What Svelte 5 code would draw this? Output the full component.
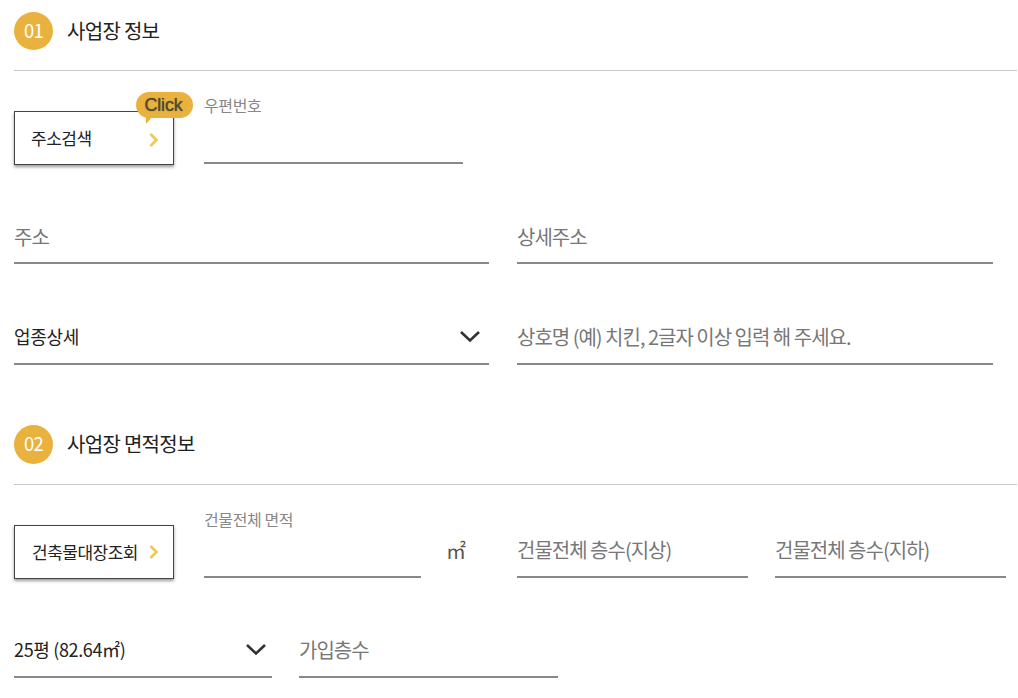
<script>
  const yellowArrow = "M1.5 1 L7.5 7 L1.5 13";
</script>

<div class="page">
  <div class="head first">
    <span class="num">01</span>
    <h2>사업장 정보</h2>
  </div>

  <div class="row r1">
    <button class="btn addr">
      주소검색
      <svg width="10" height="14" viewBox="0 0 10 14"><path d={yellowArrow} /></svg>
      <span class="click">Click</span>
    </button>
    <div class="field zip">
      <span class="small">우편번호</span>
    </div>
  </div>

  <div class="row r2">
    <div class="field w475"><span class="ph">주소</span></div>
    <div class="field w476"><span class="ph">상세주소</span></div>
  </div>

  <div class="row r3">
    <div class="field w475 select">
      <span class="val">업종상세</span>
      <svg class="chev" width="22" height="13" viewBox="0 0 22 13"><path d="M2 2 L11 10.5 L20 2" /></svg>
    </div>
    <div class="field w476"><span class="ph">상호명 (예) 치킨, 2글자 이상 입력 해 주세요.</span></div>
  </div>

  <div class="head second">
    <span class="num">02</span>
    <h2>사업장 면적정보</h2>
  </div>

  <div class="row r4">
    <button class="btn reg">
      건축물대장조회
      <svg width="10" height="14" viewBox="0 0 10 14"><path d={yellowArrow} /></svg>
    </button>
    <div class="field area">
      <span class="small">건물전체 면적</span>
    </div>
    <span class="unit">㎡</span>
    <div class="field w231"><span class="ph">건물전체 층수(지상)</span></div>
    <div class="field w231 last"><span class="ph">건물전체 층수(지하)</span></div>
  </div>

  <div class="row r5">
    <div class="field w258 select">
      <span class="val">25평 (82.64㎡)</span>
      <svg class="chev" width="22" height="13" viewBox="0 0 22 13"><path d="M2 2 L11 10.5 L20 2" /></svg>
    </div>
    <div class="field w259"><span class="ph">가입층수</span></div>
  </div>
</div>

<style>
  :global(body) {
    margin: 0;
    background: #fff;
  }

  .page {
    width: 1003px;
    height: 698px;
    padding-left: 14px;
    overflow: hidden;
    font-family: "Noto Sans CJK KR", "Noto Sans", sans-serif;
    color: #222;
  }

  .head {
    display: flex;
    align-items: center;
    height: 38px;
    padding-bottom: 20px;
    border-bottom: 1px solid #c8c8c8;
  }

  .head.first {
    padding-top: 12px;
  }

  .head.second {
    margin-top: 60px;
    padding-bottom: 21px;
  }

  .num {
    width: 39px;
    height: 38px;
    border-radius: 50%;
    background: #e9b23f;
    color: #fff;
    font-size: 18.5px;
    line-height: 37px;
    text-align: center;
    letter-spacing: -0.8px;
  }

  .second .num {
    height: 39px;
  }

  h2 {
    margin: -2px 0 0 14px;
    font-size: 20px;
    font-weight: 400;
    letter-spacing: -0.7px;
    color: #222;
  }

  .row {
    display: flex;
    align-items: flex-start;
  }

  .r1 {
    margin-top: 40px;
  }

  .r2 {
    margin-top: 59px;
    gap: 28px;
  }

  .r2 .field {
    padding-bottom: 14px;
  }

  .r3 {
    margin-top: 61px;
    gap: 28px;
  }

  .r4 {
    margin-top: 40px;
  }

  .r5 {
    margin-top: 59px;
    gap: 27px;
  }

  .btn {
    position: relative;
    box-sizing: border-box;
    display: flex;
    align-items: center;
    justify-content: space-between;
    width: 160px;
    height: 54px;
    padding: 0 14px 2px 16px;
    background: #fff;
    border: 1px solid #444;
    box-shadow: 0 2px 3px rgba(0, 0, 0, 0.4);
    font-family: inherit;
    font-size: 17px;
    letter-spacing: -0.5px;
    color: #222;
  }

  .btn.reg {
    padding-left: 17px;
  }

  .btn svg path {
    fill: none;
    stroke: #f0c850;
    stroke-width: 2.6;
  }

  .btn svg {
    margin-top: 2px;
  }

  .addr svg {
    margin-top: 6px;
  }

  .click {
    position: absolute;
    top: -20px;
    left: 121px;
    box-sizing: border-box;
    width: 57px;
    height: 26px;
    padding-right: 2px;
    border-radius: 13px;
    background: #e9b23f;
    color: #544a30;
    font-family: "Liberation Sans", sans-serif;
    font-size: 18px;
    line-height: 27px;
    text-align: center;
    letter-spacing: -0.2px;
    text-shadow: 0 0 1px #544a30;
  }

  .click::after {
    content: "";
    position: absolute;
    left: 10px;
    top: 24px;
    border-top: 8px solid #e9b23f;
    border-left: 0 solid transparent;
    border-right: 7px solid transparent;
  }

  .field {
    position: relative;
    box-sizing: border-box;
    display: flex;
    align-items: center;
    height: 40px;
    padding-bottom: 16px;
    border-bottom: 2px solid #888;
    font-size: 20px;
    letter-spacing: -1px;
  }

  .small {
    position: absolute;
    left: 0;
    top: -3px;
    font-size: 16px;
    color: #888;
    letter-spacing: -0.4px;
  }

  .ph {
    color: #777;
    white-space: nowrap;
  }

  .val {
    font-size: 18px;
    letter-spacing: -0.35px;
    color: #222;
    white-space: nowrap;
  }

  .select {
    justify-content: space-between;
    padding-right: 8px;
  }

  .w258.select {
    padding-right: 5px;
  }

  .chev path {
    fill: none;
    stroke: #333;
    stroke-width: 2.6;
  }

  .zip {
    width: 259px;
    margin-left: 30px;
    margin-top: -15px;
    height: 68px;
  }

  .area {
    width: 217px;
    margin-left: 30px;
    margin-top: -15px;
    height: 68px;
  }

  .unit {
    width: 96px;
    padding-left: 25px;
    box-sizing: border-box;
    margin-top: 11px;
    font-size: 20px;
    color: #555;
  }

  .w475 {
    width: 475px;
  }

  .w476 {
    width: 476px;
  }

  .w231 {
    width: 231px;
    height: 53px;
    padding-bottom: 3px;
  }

  .last {
    margin-left: 27px;
  }

  .w258 {
    width: 258px;
  }

  .w259 {
    width: 259px;
  }
</style>
